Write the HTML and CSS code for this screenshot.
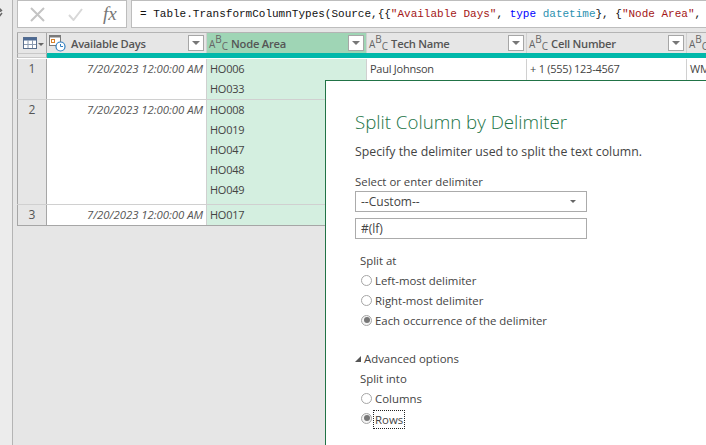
FILE: index.html
```html
<!DOCTYPE html>
<html lang="en">
<head>
<meta charset="utf-8">
<title>Split Column by Delimiter</title>
<link rel="stylesheet" href="styles.css">
</head>
<body>
<div class="app">
  <aside class="rail">
    <svg class="rail-icon" width="8" height="14" viewBox="0 0 8 14"><path d="M0 2 L4 6 M0 7 L3 6 M4 8 L0 13" stroke="#666" stroke-width="1.5" fill="none"/></svg>
  </aside>
  <main class="work">
    <div class="formula-bar">
      <div class="fx-box">
        <svg width="15" height="15" viewBox="0 0 15 15" class="fx-x"><path d="M1 1 L14 14 M14 1 L1 14" stroke="#c4c4c4" stroke-width="2" fill="none"/></svg>
        <svg width="15" height="13" viewBox="0 0 15 13" class="fx-check"><path d="M1 7 L5.500 12 L14 1" stroke="#d8d8d8" stroke-width="2" fill="none"/></svg>
        <span class="fx-label">fx</span>
      </div>
      <div class="formula"><span>= Table.TransformColumnTypes(Source,{{</span><span class="str">"Available Days"</span><span>, </span><span class="kw">type</span><span> </span><span class="ty">datetime</span><span>}, {</span><span class="str">"Node Area"</span><span>,</span></div>
    </div>
    <div class="stage">
      <div class="table">
        <div class="row head">
          <div class="cell num corner">
            <svg width="14" height="12" viewBox="0 0 14 12"><rect x="0.500" y="0.500" width="13" height="11" fill="#fff" stroke="#5a6f8c"/><rect x="0.500" y="0.500" width="13" height="3" fill="#4d6a94"/><path d="M5 3 V11 M9.500 3 V11 M1 7.500 H13" stroke="#8a9ab0" fill="none"/></svg>
            <i class="mini-caret"></i>
          </div>
          <div class="cell col">
            <svg class="type-date" width="17" height="17" viewBox="0 0 17 17"><rect x="0.500" y="0.500" width="11" height="10" fill="#fff" stroke="#7a7a7a"/><rect x="0.500" y="0.500" width="11" height="2" fill="#7a7a7a"/><rect x="2.500" y="4.500" width="3" height="3" fill="#fff" stroke="#d9822b"/><circle cx="11.500" cy="11.500" r="4.500" fill="#fff" stroke="#2f7fc1" stroke-width="1.200"/><path d="M11.500 9 V11.500 H14" stroke="#2f7fc1" fill="none"/></svg>
            <span class="col-name">Available Days</span><span class="filter"></span>
          </div>
          <div class="cell col selected">
            <span class="abc"><b>A</b><b class="up">B</b><b class="lo">C</b></span><span class="col-name">Node Area</span><span class="filter"></span>
          </div>
          <div class="cell col">
            <span class="abc"><b>A</b><b class="up">B</b><b class="lo">C</b></span><span class="col-name">Tech Name</span><span class="filter"></span>
          </div>
          <div class="cell col">
            <span class="abc"><b>A</b><b class="up">B</b><b class="lo">C</b></span><span class="col-name">Cell Number</span><span class="filter"></span>
          </div>
          <div class="cell col last">
            <span class="abc"><b>A</b><b class="up">B</b><b class="lo">C</b></span>
          </div>
        </div>
        <div class="quality">
          <div class="q-gap"></div>
          <div class="q-bar"></div>
        </div>
        <div class="row data">
          <div class="cell num">1</div>
          <div class="cell date">7/20/2023 12:00:00 AM</div>
          <div class="cell node"><div>HO006</div><div>HO033</div></div>
          <div class="cell text">Paul Johnson</div>
          <div class="cell text">+ 1 (555) 123-4567</div>
          <div class="cell text last">WM</div>
        </div>
        <div class="row data tall">
          <div class="cell num">2</div>
          <div class="cell date">7/20/2023 12:00:00 AM</div>
          <div class="cell node"><div>HO008</div><div>HO019</div><div>HO047</div><div>HO048</div><div>HO049</div></div>
          <div class="cell text"></div>
          <div class="cell text"></div>
          <div class="cell text last"></div>
        </div>
        <div class="row data final">
          <div class="cell num">3</div>
          <div class="cell date">7/20/2023 12:00:00 AM</div>
          <div class="cell node"><div>HO017</div></div>
          <div class="cell text"></div>
          <div class="cell text"></div>
          <div class="cell text last"></div>
        </div>
      </div>
      <section class="dialog">
        <h1 class="dialog-title">Split Column by Delimiter</h1>
        <p class="dialog-sub">Specify the delimiter used to split the text column.</p>
        <div class="field-label">Select or enter delimiter</div>
        <div class="box select"><span>--Custom--</span><i class="sel-caret"></i></div>
        <div class="box input">#(lf)</div>
        <div class="group split-at">
          <div class="line">Split at</div>
          <div class="line radio"><i class="dot"></i>Left-most delimiter</div>
          <div class="line radio"><i class="dot"></i>Right-most delimiter</div>
          <div class="line radio"><i class="dot on"></i>Each occurrence of the delimiter</div>
        </div>
        <div class="adv"><i class="adv-caret"></i>Advanced options</div>
        <div class="group">
          <div class="line">Split into</div>
          <div class="line radio"><i class="dot"></i>Columns</div>
          <div class="line radio"><i class="dot on"></i><span class="focus">Rows</span></div>
        </div>
      </section>
    </div>
  </main>
</div>
</body>
</html>
```
FILE: styles.css
```css
* { box-sizing: border-box; }
html, body { margin: 0; height: 100%; }
body { width: 706px; height: 445px; overflow: hidden; background: #e6e6e6; font-family: "Open Sans", "Noto Sans", sans-serif; font-size: 11.400px; color: #444; }
.app { display: flex; height: 445px; }
.rail { width: 13px; flex: none; background: #ececec; border-right: 1px solid #b4b4b4; padding-top: 5px; }
.rail-icon { display: block; margin-left: -2px; }
.work { flex: 1; min-width: 0; padding-left: 4px; display: flex; flex-direction: column; }
.formula-bar { display: flex; gap: 4px; height: 28px; flex: none; }
.fx-box { width: 110px; background: #fff; border: 1px solid #bdbdbd; display: flex; align-items: center; }
.fx-x { margin-left: 12px; }
.fx-check { margin-left: 23px; }
.fx-label { margin-left: 20px; font-family: "Liberation Serif", serif; font-style: italic; font-size: 19px; line-height: 24px; color: #777; }
.formula { flex: 1; min-width: 0; background: #fff; border: 1px solid #bdbdbd; border-right: 0; font-family: "Liberation Mono", monospace; font-size: 11px; line-height: 26px; padding-left: 8px; white-space: pre; overflow: hidden; color: #111; }
.str { color: #a31515; }
.kw { color: #0000ff; }
.ty { color: #2b91af; }
.stage { flex: 1; position: relative; margin-top: 4px; min-height: 0; }
.table { border-top: 1px solid #b4b4b4; width: 689px; }
.row { display: grid; grid-template-columns: 30px 160px 160px 160px 160px 19px; }
.head { height: 20px; background: #e6e6e6; }
.cell { min-width: 0; }
.num { border-left: 1px solid #a6a6a6; border-right: 1px solid #a6a6a6; background: #e6e6e6; text-align: center; font-size: 12px; line-height: 20px; color: #555; }
.corner { display: flex; align-items: center; padding-left: 5px; gap: 1px; }
.mini-caret { width: 0; height: 0; border: 3px solid transparent; border-top-color: #666; margin-top: 5px; }
.col { display: flex; align-items: center; border-right: 1px solid #d0d0d0; padding: 0 2px 0 2px; }
.col.selected { background: #9fd5b5; }
.col.last { border-right: 0; }
.type-date { margin-right: 5px; flex: none; }
.abc { height: 18px; flex: none; margin-right: 3px; display: flex; font-size: 10px; line-height: 8px; color: #666; }
.abc b { font-weight: 400; margin-top: 6px; }
.abc b.up { margin-top: 1px; }
.abc b.lo { margin-top: 8px; }
.col-name { flex: 1; font-weight: 600; font-size: 11.200px; color: #555; white-space: nowrap; letter-spacing: -0.250px; }
.filter { width: 16px; height: 16px; flex: none; background: #fff; border: 1px solid #a6a6a6; position: relative; }
.filter::after { content: ""; position: absolute; left: 3px; top: 5px; border: 4px solid transparent; border-top-color: #777; border-bottom: 0; }
.quality { display: grid; grid-template-columns: 30px 1fr; height: 5px; }
.q-gap { background: #e6e6e6; border: 1px solid #c8c8c8; border-left-color: #a6a6a6; border-right-color: #a6a6a6; }
.q-bar { background: #01b8aa; }
.data { background: #fff; border-top: 1px solid #d0d0d0; }
.data:nth-child(3) { border-top-color: #fff; }
.data.tall .node { padding-bottom: 4px; }
.data .cell { padding-left: 3px; padding-right: 3px; line-height: 20px; font-size: 11px; letter-spacing: -0.250px; }
.data .cell.num { padding: 0; font-size: 12px; letter-spacing: 0; }
.data .cell.date { text-align: right; font-style: italic; font-size: 11.400px; letter-spacing: -0.050px; border-right: 1px solid #d0d0d0; color: #555; white-space: nowrap; }
.node { background: #d4efe0; border-right: 1px solid #d0d0d0; color: #444; }
.text { border-right: 1px solid #d0d0d0; white-space: nowrap; overflow: hidden; }
.text.last { border-right: 0; }
.final { border-bottom: 1px solid #a6a6a6; }
.dialog { position: absolute; left: 308px; top: 48px; right: 0; bottom: 0; background: #fff; border: 1px solid #217346; border-right: 0; border-bottom: 0; padding: 27px 0 0 29px; color: #444; }
.dialog-title { margin: 0; font-size: 18.700px; font-weight: 300; line-height: 28px; color: #217346; }
.dialog-sub { margin: 7px 0 0; line-height: 18px; font-size: 12.300px; }
.field-label { margin-top: 12px; line-height: 18px; }
.box { width: 232px; height: 21px; border: 1px solid #ababab; padding-left: 5px; line-height: 19px; background: #fff; font-size: 12px; }
.select { display: flex; justify-content: space-between; align-items: center; }
.input { margin-top: 6px; }
.sel-caret { border: 3px solid transparent; border-top-color: #666; border-bottom: 0; margin-right: 10px; }
.group { padding-left: 5px; }
.split-at { margin-top: 12px; }
.line { line-height: 20px; height: 20px; display: flex; align-items: center; white-space: nowrap; }
.dot { width: 11px; height: 11px; border: 1px solid #a6a6a6; border-radius: 50%; margin: -2px 3px 0 1px; background: #fff; flex: none; position: relative; }
.dot.on { background: #f4f4f4; }
.dot.on::after { content: ""; position: absolute; inset: 1.500px; border-radius: 50%; background: #777; }
.adv { margin-top: 18px; line-height: 20px; height: 20px; display: flex; align-items: center; }
.adv-caret { width: 0; height: 0; border-style: solid; border-width: 0 0 6px 6px; border-color: transparent transparent #555 transparent; margin-right: 3px; }
.focus { outline: 1px dotted #222; line-height: 17px; display: block; padding: 0 1px; margin-left: -1px; }
```
